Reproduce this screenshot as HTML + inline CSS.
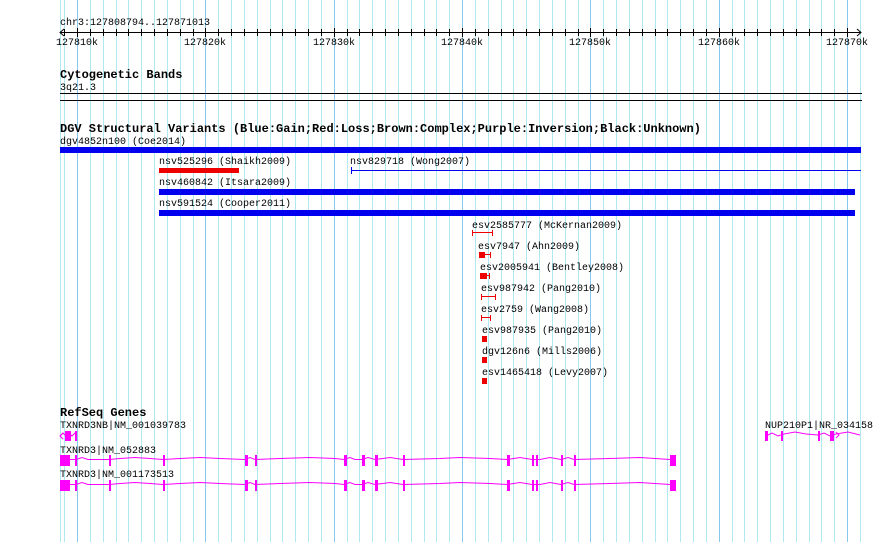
<!DOCTYPE html>
<html><head><meta charset="utf-8"><style>
html,body{margin:0;padding:0;background:#fff;}
svg{display:block;}
text{font-family:"Liberation Mono",monospace;font-size:10px;fill:#000;}
.b{font-weight:bold;font-size:12px;}
</style></head><body>
<svg width="890" height="542" viewBox="0 0 890 542" xmlns="http://www.w3.org/2000/svg">
<path stroke="#aee8f0" stroke-width="1" fill="none" d="M60.5 0V542M64.5 0V542M90.5 0V542M103.5 0V542M116.5 0V542M128.5 0V542M141.5 0V542M154.5 0V542M167.5 0V542M180.5 0V542M193.5 0V542M218.5 0V542M231.5 0V542M244.5 0V542M257.5 0V542M270.5 0V542M282.5 0V542M295.5 0V542M308.5 0V542M321.5 0V542M347.5 0V542M359.5 0V542M372.5 0V542M385.5 0V542M398.5 0V542M411.5 0V542M424.5 0V542M436.5 0V542M449.5 0V542M475.5 0V542M488.5 0V542M501.5 0V542M513.5 0V542M526.5 0V542M539.5 0V542M552.5 0V542M565.5 0V542M578.5 0V542M603.5 0V542M616.5 0V542M629.5 0V542M642.5 0V542M655.5 0V542M667.5 0V542M680.5 0V542M693.5 0V542M706.5 0V542M732.5 0V542M744.5 0V542M757.5 0V542M770.5 0V542M783.5 0V542M796.5 0V542M809.5 0V542M821.5 0V542M834.5 0V542M860.5 0V542"/>
<path stroke="#88c8ec" stroke-width="1" fill="none" d="M77.5 0V542M205.5 0V542M334.5 0V542M462.5 0V542M590.5 0V542M719.5 0V542M847.5 0V542"/>
<path stroke="#000" stroke-width="1" fill="none" d="M64.5 29V36M90.5 29V36M103.5 29V36M116.5 29V36M128.5 29V36M141.5 29V36M154.5 29V36M167.5 29V36M180.5 29V36M193.5 29V36M218.5 29V36M231.5 29V36M244.5 29V36M257.5 29V36M270.5 29V36M282.5 29V36M295.5 29V36M308.5 29V36M321.5 29V36M347.5 29V36M359.5 29V36M372.5 29V36M385.5 29V36M398.5 29V36M411.5 29V36M424.5 29V36M436.5 29V36M449.5 29V36M475.5 29V36M488.5 29V36M501.5 29V36M513.5 29V36M526.5 29V36M539.5 29V36M552.5 29V36M565.5 29V36M578.5 29V36M603.5 29V36M616.5 29V36M629.5 29V36M642.5 29V36M655.5 29V36M667.5 29V36M680.5 29V36M693.5 29V36M706.5 29V36M732.5 29V36M744.5 29V36M757.5 29V36M770.5 29V36M783.5 29V36M796.5 29V36M809.5 29V36M821.5 29V36M834.5 29V36M77.5 28V37M205.5 28V37M334.5 28V37M462.5 28V37M590.5 28V37M719.5 28V37M847.5 28V37"/>
<text x="60" y="25">chr3:127808794..127871013</text>
<line x1="60" y1="32.5" x2="861" y2="32.5" stroke="#000"/>
<polyline points="64,29 60,32.5 64,36" fill="none" stroke="#000"/>
<polyline points="857,29 861,32.5 857,36" fill="none" stroke="#000"/>
<g text-anchor="middle">
<text x="77" y="45">127810k</text><text x="205" y="45">127820k</text><text x="334" y="45">127830k</text><text x="462" y="45">127840k</text><text x="590" y="45">127850k</text><text x="719" y="45">127860k</text><text x="847" y="45">127870k</text>
</g>
<text class="b" x="60" y="78">Cytogenetic Bands</text>
<text x="60" y="90">3q21.3</text>
<line x1="60" y1="93.5" x2="862" y2="93.5" stroke="#000"/>
<line x1="60" y1="100.5" x2="862" y2="100.5" stroke="#000"/>
<text class="b" x="60" y="132">DGV Structural Variants (Blue:Gain;Red:Loss;Brown:Complex;Purple:Inversion;Black:Unknown)</text>
<text x="60" y="144">dgv4852n100 (Coe2014)</text>
<rect x="60" y="147" width="801" height="6" fill="#0000ee"/>
<text x="159" y="164">nsv525296 (Shaikh2009)</text>
<rect x="159" y="168" width="80" height="5" fill="#ee0000"/>
<text x="350" y="164">nsv829718 (Wong2007)</text>
<line x1="351" y1="170.5" x2="861" y2="170.5" stroke="#0000ee"/>
<line x1="351.5" y1="167" x2="351.5" y2="174" stroke="#0000ee"/>
<text x="159" y="185">nsv460842 (Itsara2009)</text>
<rect x="159" y="189" width="696" height="6" fill="#0000ee"/>
<text x="159" y="206">nsv591524 (Cooper2011)</text>
<rect x="159" y="210" width="696" height="6" fill="#0000ee"/>
<text x="472" y="228">esv2585777 (McKernan2009)</text>
<text x="478" y="249">esv7947 (Ahn2009)</text>
<text x="480" y="270">esv2005941 (Bentley2008)</text>
<text x="481" y="291">esv987942 (Pang2010)</text>
<text x="481" y="312">esv2759 (Wang2008)</text>
<text x="482" y="333">esv987935 (Pang2010)</text>
<text x="482" y="354">dgv126n6 (Mills2006)</text>
<text x="482" y="375">esv1465418 (Levy2007)</text>
<g fill="#ee0000" stroke="#ee0000">
<line x1="472" y1="232.5" x2="493" y2="232.5"/><line x1="472.5" y1="230" x2="472.5" y2="236"/><line x1="492.5" y1="230" x2="492.5" y2="236"/>
<rect x="479" y="252" width="6" height="6" stroke="none"/><line x1="485" y1="254.5" x2="491" y2="254.5"/><line x1="490.5" y1="252" x2="490.5" y2="258"/>
<rect x="480" y="273" width="7" height="6" stroke="none"/><line x1="487" y1="275.5" x2="490" y2="275.5"/><line x1="489.5" y1="273" x2="489.5" y2="279"/>
<line x1="481" y1="296.5" x2="496" y2="296.5"/><line x1="481.5" y1="294" x2="481.5" y2="300"/><line x1="495.5" y1="294" x2="495.5" y2="300"/>
<line x1="481" y1="317.5" x2="491" y2="317.5"/><line x1="481.5" y1="315" x2="481.5" y2="321"/><line x1="490.5" y1="315" x2="490.5" y2="321"/>
<rect x="482" y="336" width="5" height="6" stroke="none"/>
<rect x="482" y="357" width="5" height="6" stroke="none"/>
<rect x="482" y="378" width="5" height="6" stroke="none"/>
</g>
<text class="b" x="60" y="416">RefSeq Genes</text>
<text x="60" y="428">TXNRD3NB|NM_001039783</text>
<text x="60" y="453">TXNRD3|NM_052883</text>
<text x="60" y="477">TXNRD3|NM_001173513</text>
<text x="765" y="428">NUP210P1|NR_034158</text>
<g fill="#ff00ff" stroke="none">
<polyline points="60,436 63,433 66,436 69,433 72,436 75,433 77,436" fill="none" stroke="#ff00ff"/>
<polyline points="63,433 60,436 63,439" fill="none" stroke="#ff00ff"/>
<rect x="65" y="431" width="6" height="10"/><rect x="75" y="431" width="2" height="10"/>

<polyline fill="none" stroke="#ff00ff" points="70,459.5 76,459.5 82,457.5 88,459.5 96,459.5 109,459.5 120,458.5 135,457.5 150,458.5 163,459.5 180,458.5 200,457.5 220,458.5 245,459.5 250,457.5 255,459.5 280,458.5 310,457.5 335,458.5 344,459.5 350,457.5 355,459.5 362,459.5 368,457.5 375,459.5 390,457.5 403,459.5 440,458.5 460,457.5 490,458.5 507,459.5 520,457.5 532,459.5 540,459.5 550,457.5 561,459.5 568,457.5 574,459.5 610,458.5 640,457.5 670,459.5"/>
<polyline fill="none" stroke="#ff00ff" points="70,484.5 76,484.5 82,482.5 88,484.5 96,484.5 109,484.5 120,483.5 135,482.5 150,483.5 163,484.5 180,483.5 200,482.5 220,483.5 245,484.5 250,482.5 255,484.5 280,483.5 310,482.5 335,483.5 344,484.5 350,482.5 355,484.5 362,484.5 368,482.5 375,484.5 390,482.5 403,484.5 440,483.5 460,482.5 490,483.5 507,484.5 520,482.5 532,484.5 540,484.5 550,482.5 561,484.5 568,482.5 574,484.5 610,483.5 640,482.5 670,484.5"/>
<rect x="60" y="455" width="10" height="11"/><rect x="75" y="455" width="2" height="11"/><rect x="109" y="455" width="2" height="11"/><rect x="163" y="455" width="2" height="11"/><rect x="245" y="455" width="3" height="11"/><rect x="255" y="455" width="2" height="11"/><rect x="344" y="455" width="3" height="11"/><rect x="362" y="455" width="3" height="11"/><rect x="375" y="455" width="3" height="11"/><rect x="403" y="455" width="2" height="11"/><rect x="507" y="455" width="3" height="11"/><rect x="532" y="455" width="2" height="11"/><rect x="536" y="455" width="2" height="11"/><rect x="561" y="455" width="2" height="11"/><rect x="574" y="455" width="2" height="11"/><rect x="670" y="455" width="6" height="11"/>
<rect x="60" y="480" width="10" height="11"/><rect x="75" y="480" width="2" height="11"/><rect x="109" y="480" width="2" height="11"/><rect x="163" y="480" width="2" height="11"/><rect x="245" y="480" width="3" height="11"/><rect x="255" y="480" width="2" height="11"/><rect x="344" y="480" width="3" height="11"/><rect x="362" y="480" width="3" height="11"/><rect x="375" y="480" width="3" height="11"/><rect x="403" y="480" width="2" height="11"/><rect x="507" y="480" width="3" height="11"/><rect x="532" y="480" width="2" height="11"/><rect x="536" y="480" width="2" height="11"/><rect x="561" y="480" width="2" height="11"/><rect x="574" y="480" width="2" height="11"/><rect x="670" y="480" width="6" height="11"/>

<polyline points="766,436 772,433 778,436 784,434 795,432 806,434 818,435 824,433 830,436 836,434 848,432 860,435" fill="none" stroke="#ff00ff"/>
<polyline points="836,432 839,435 836,438" fill="none" stroke="#ff00ff"/>
<rect x="765" y="431" width="3" height="10"/><rect x="781" y="431" width="2" height="10"/><rect x="818" y="431" width="2" height="10"/><rect x="830" y="431" width="4" height="10"/>
</g>
</svg>
</body></html>
